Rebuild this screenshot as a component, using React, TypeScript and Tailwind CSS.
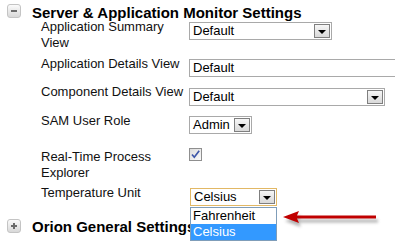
import React from "react";

const font = { fontFamily: '"Liberation Sans", Arial, sans-serif' };

function Arrow() {
  return (
    <div className="w-[16px] h-[14px] mr-[1px] border border-[#7f7f7f] bg-gradient-to-b from-[#f6f6f6] to-[#d9d9d9] flex items-center justify-center shrink-0">
      <div className="w-0 h-0 border-l-[4px] border-r-[4px] border-t-[4px] border-l-transparent border-r-transparent border-t-black mt-[1px]" />
    </div>
  );
}

function Sel({ w, text, focus, arrow = true }: { w: string; text: string; focus?: boolean; arrow?: boolean }) {
  return (
    <div
      className={`${w} h-[18px] border ${focus ? "border-[#e2b865]" : "border-[#a9a9a9]"} bg-white flex items-center shrink-0`}
    >
      <span className="flex-1 pl-[3px] text-[13px] leading-[16px] text-black whitespace-nowrap overflow-hidden">{text}</span>
      {arrow && <Arrow />}
    </div>
  );
}

function ToggleIcon({ plus }: { plus?: boolean }) {
  return (
    <div className="w-[14px] h-[14px] rounded-[3px] border border-[#c4c4c4] bg-gradient-to-b from-[#fbfbfb] to-[#d8d8d8] flex items-center justify-center shrink-0 relative">
      <div className="w-[6px] h-[2px] bg-[#6b6b6b]" />
      {plus && <div className="absolute w-[2px] h-[6px] bg-[#6b6b6b]" />}
    </div>
  );
}

function Label({ children }: { children: React.ReactNode }) {
  return <div className="w-[148px] pr-[3px] shrink-0">{children}</div>;
}

export default function App() {
  return (
    <div className="w-[395px] h-[245px] bg-white overflow-hidden relative text-black" style={font}>
      <div className="flex items-start pl-[7px] pt-[4px] h-[19px]">
        <ToggleIcon />
        <span className="ml-[11px] text-[15px] font-bold leading-[18px] whitespace-nowrap">
          Server &amp; Application Monitor Settings
        </span>
      </div>
      <div className="pl-[41px] text-[13px] leading-[16px] text-[#111]">
        <div className="flex items-start h-[37px]">
          <Label>Application Summary View</Label>
          <div className="mt-[3px]">
            <Sel w="w-[143px]" text="Default" />
          </div>
        </div>
        <div className="flex items-start h-[28px]">
          <Label>Application Details View</Label>
          <div className="mt-[3px]">
            <Sel w="w-[230px]" text="Default" arrow={false} />
          </div>
        </div>
        <div className="flex items-start h-[29px]">
          <Label>Component Details View</Label>
          <div className="mt-[4px]">
            <Sel w="w-[196px]" text="Default" />
          </div>
        </div>
        <div className="flex items-start h-[36px]">
          <Label>SAM User Role</Label>
          <div className="mt-[3px]">
            <Sel w="w-[63px]" text="Admin" />
          </div>
        </div>
        <div className="flex items-start h-[36px]">
          <Label>
            <div className="w-[125px]">Real-Time Process Explorer</div>
          </Label>
          <div className="-mt-[1px] w-[13px] h-[13px] border border-[#8f8f8f] bg-gradient-to-br from-[#dcdcdc] to-[#fafafa] flex items-center justify-center">
            <svg width="11" height="11" viewBox="0 0 11 11">
              <path d="M2 5.5 L4.3 8.2 L9.2 1.8" fill="none" stroke="#3d56a8" strokeWidth="1.7" />
            </svg>
          </div>
        </div>
        <div className="flex items-start h-[33px]">
          <Label>Temperature Unit</Label>
          <div className="mt-[3px] ml-[1px] relative">
            <Sel w="w-[87px]" text="Celsius" focus />
            <div className="absolute left-0 top-[19px] w-[87px] border border-[#7f9db9] bg-white z-10">
              <div className="h-[16px] pl-[2px] text-black leading-[16px]">Fahrenheit</div>
              <div className="h-[16px] pl-[2px] bg-[#3399ff] text-white leading-[16px]">Celsius</div>
            </div>
          </div>
        </div>
      </div>
      <div className="flex items-start pl-[7px] h-[19px]">
        <div className="mt-[1px]">
          <ToggleIcon plus />
        </div>
        <span className="ml-[11px] text-[15px] font-bold leading-[18px] whitespace-nowrap">Orion General Settings</span>
      </div>
      <svg className="absolute left-[280px] top-[205px]" width="110" height="25" viewBox="0 0 110 25">
        <defs>
          <filter id="sh" x="-20%" y="-50%" width="140%" height="200%">
            <feGaussianBlur stdDeviation="1.5" />
          </filter>
        </defs>
        <g filter="url(#sh)" opacity="0.45" transform="translate(2 4)">
          <path d="M3 12 L19 6 L17 10.5 L96 10.5 L96 13.5 L17 13.5 L19 18 Z" fill="#555" />
        </g>
        <path d="M3 12 L19 6 L17 10.5 L96 10.5 L96 13.5 L17 13.5 L19 18 Z" fill="#c00000" />
      </svg>
    </div>
  );
}
